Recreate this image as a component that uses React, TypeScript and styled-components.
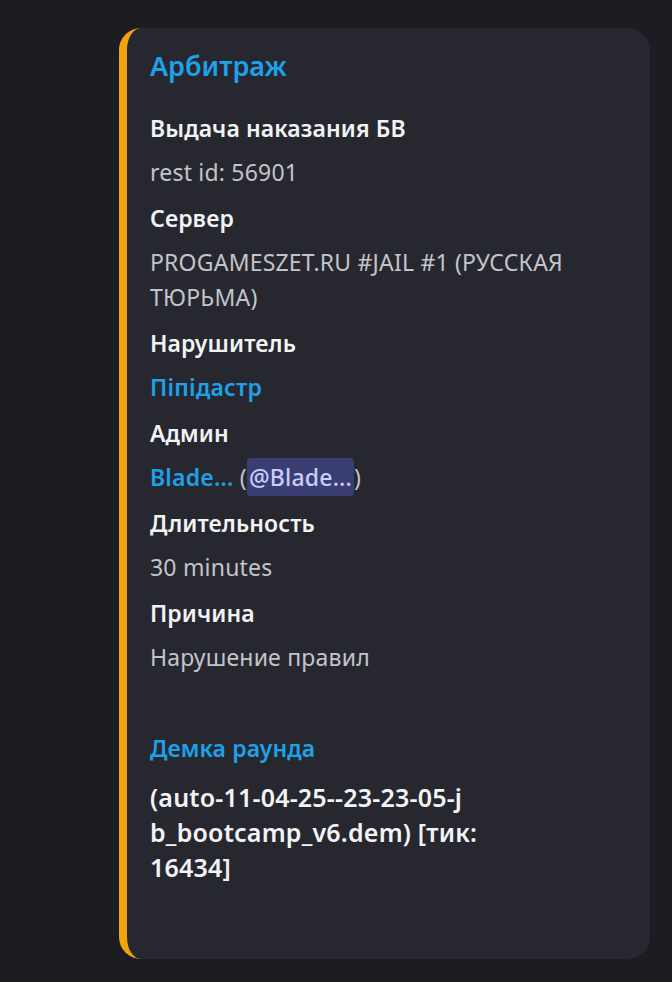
import React from 'react'
import styled, { createGlobalStyle } from 'styled-components'

const GlobalStyle = createGlobalStyle`
  html, body {
    margin: 0;
    padding: 0;
    background: #1c1d22;
  }
  body {
    font-family: 'Noto Sans', 'Open Sans', sans-serif;
    -webkit-font-smoothing: antialiased;
  }
`

const Page = styled.div`
  min-height: 982px;
  box-sizing: border-box;
  padding: 28px 22px 25px 119px;
`

const Embed = styled.div`
  box-sizing: border-box;
  min-height: 929px;
  background: #27282f;
  border-left: 8px solid #f2a20c;
  border-radius: 22px;
  padding: 20px 24px 74px 23px;
  display: flex;
  flex-direction: column;
`

const Title = styled.div`
  color: #1da1e9;
  font-size: 27px;
  line-height: 36px;
  font-weight: 600;
  margin-bottom: 27px;
`

const Fields = styled.div`
  display: flex;
  flex-direction: column;
  gap: 10px;
`

const Field = styled.div<{ $narrow?: boolean }>`
  max-width: ${(p) => (p.$narrow ? '336px' : 'none')};
  & + & {
    margin-top: 1px;
  }
`

const Spacer = styled.div`
  height: 36px;
`

const FieldName = styled.div<{ $accent?: boolean }>`
  color: ${(p) => (p.$accent ? '#1da1e9' : '#f2f3f5')};
  font-size: 23px;
  line-height: 35px;
  font-weight: 600;
  letter-spacing: 0.1px;
  margin-bottom: ${(p) => (p.$accent ? '14px' : '9px')};
`

const FieldValue = styled.div<{ $strong?: boolean }>`
  color: ${(p) => (p.$strong ? '#f2f3f5' : '#c3c4ca')};
  font-size: ${(p) => (p.$strong ? '25px' : '23px')};
  line-height: 35px;
  font-weight: ${(p) => (p.$strong ? 600 : 400)};
  letter-spacing: 0.2px;
  overflow-wrap: anywhere;
`

const Link = styled.span`
  color: #1da1e9;
  font-weight: 600;
`

const Mention = styled.span`
  color: #c9cdfb;
  background: #3b3e73;
  border-radius: 4px;
  padding: 3px 2px;
  font-weight: 500;
`

type Row = {
  name: string
  value: React.ReactNode
}

const rows: Row[] = [
  { name: 'Выдача наказания БВ', value: 'rest id: 56901' },
  { name: 'Сервер', value: 'PROGAMESZET.RU #JAIL #1 (РУССКАЯ ТЮРЬМА)' },
  { name: 'Нарушитель', value: <Link>Піпідастр</Link> },
  {
    name: 'Админ',
    value: (
      <>
        <Link>Blade...</Link> (<Mention>@Blade...</Mention>)
      </>
    ),
  },
  { name: 'Длительность', value: '30 minutes' },
  { name: 'Причина', value: 'Нарушение правил' },
]

const App = () => {
  return (
    <Page>
      <GlobalStyle />
      <Embed>
        <Title>Арбитраж</Title>
        <Fields>
          {rows.map((row) => (
            <Field key={row.name}>
              <FieldName>{row.name}</FieldName>
              <FieldValue>{row.value}</FieldValue>
            </Field>
          ))}
          <Spacer />
          <Field $narrow>
            <FieldName $accent>Демка раунда</FieldName>
            <FieldValue $strong>
              (auto-11-04-25--23-23-05-j<wbr />b_bootcamp_v6.dem) [тик: 16434]
            </FieldValue>
          </Field>
        </Fields>
      </Embed>
    </Page>
  )
}

export default App
